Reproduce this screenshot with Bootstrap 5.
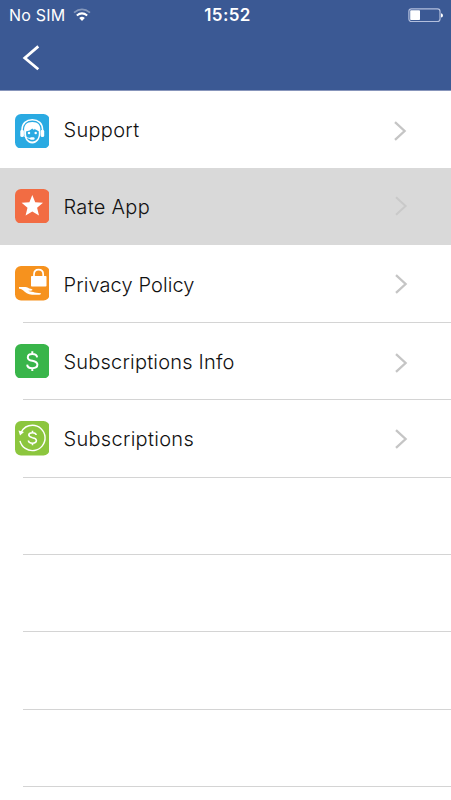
<!DOCTYPE html>
<html lang="en">
<head>
<meta charset="utf-8">
<meta name="viewport" content="width=device-width, initial-scale=1">
<title>Settings</title>
<link href="https://cdn.jsdelivr.net/npm/bootstrap@5.3.0/dist/css/bootstrap.min.css" rel="stylesheet">
<style>
body{font-family:Inter,"Liberation Sans",sans-serif;color:#111;height:800px;overflow:hidden;background:#fff}
.app-head{height:91px;background:#3b5994;border-bottom:1px solid #8795bb}
.status-line{height:30px;padding:0 8px 0 9px;display:grid;grid-template-columns:1fr auto 1fr}
.carrier{font-size:16px;letter-spacing:.2px;line-height:30px}
.clock{font-size:17px;font-weight:600;letter-spacing:.4px;line-height:30px;padding-left:3px}
.back-link{margin:13.5px 0 0 21px;width:20px;height:28px}
.menu-row{height:77.4px;padding:0 43px 0 14.5px;background:none;color:#111}
.first-row{height:77px}
.menu-row.pressed{background:#d9d9d9}
.app-icon{width:34.5px;height:34.5px;margin-right:14.5px}
.menu-text{font-size:20px;font-weight:300;line-height:28px;letter-spacing:.2px;padding-top:1px}
.menu-row .wide-text{letter-spacing:.3px}
.ruled{background:linear-gradient(#d4d4d4,#d4d4d4) 22.5px 100%/100% 1px no-repeat}
.first-row .chev{margin-right:1.5px}
</style>
<script src="https://cdn.jsdelivr.net/npm/bootstrap@5.3.0/dist/js/bootstrap.bundle.min.js"></script>
</head>
<body>
<header class="app-head text-white">
  <div class="status-line align-items-center">
    <div class="d-flex align-items-center gap-2"><span class="carrier text-nowrap">No SIM</span>
      <svg width="18" height="14" viewBox="0 0 18 14" fill="none" stroke="#fff"><path d="M1 4.6Q9-1.8 17 4.6" stroke-width="1.8" opacity=".38"/><path d="M3.8 7.5Q9 3.2 14.2 7.5" stroke-width="2"/><path d="M6.2 10Q9 7.7 11.8 10L9 13Z" fill="#fff" stroke="none"/></svg>
    </div>
    <span class="clock">15:52</span>
    <svg class="ms-auto" width="36" height="15" viewBox="0 0 36 15"><rect x="1.9" y=".9" width="31.1" height="12.6" rx="2.5" fill="none" stroke="#b3bfdd" stroke-width="1.2"/><rect x="3.2" y="2.3" width="9.8" height="9.8" rx=".8" fill="#fff"/><path d="M34 5.2Q36 5.4 36 7.4T34 9.6Z" fill="#fff"/></svg>
  </div>
  <a class="back-link d-block" href="#" aria-label="Back"><svg class="d-block" width="20" height="28" viewBox="0 0 20 28"><path d="M17.3 2.4 3.8 14 17.3 25.3" fill="none" stroke="#fff" stroke-width="2.8"/></svg></a>
</header>
<main>
  <a href="#" class="menu-row first-row d-flex align-items-center text-decoration-none">
    <svg class="app-icon" style="margin-top:3px" viewBox="0 0 34.5 34.5"><rect width="34.5" height="34.5" rx="6" fill="#2aaae2"/>
      <path d="M7 17V15.8C7 9.4 11.4 5.8 17.3 5.8S27.6 9.4 27.6 15.8V17" fill="none" stroke="#fff" stroke-width="1.5"/>
      <rect x="5.3" y="15.8" width="3.6" height="7.2" rx="1.6" fill="#fff"/><rect x="25.6" y="15.8" width="3.6" height="7.2" rx="1.6" fill="#fff"/>
      <path d="M9.2 17.5C8.5 11 11.7 8 17.3 8S26.1 11 25.3 17.5C25.8 24 22.6 29.4 17.3 29.4S8.8 24 9.2 17.5Z" fill="#fff"/>
      <path d="M11 17.4Q15 16.8 17.3 14.4Q18.2 15.6 19.4 15.9L19.1 14.8Q21.5 16 23.7 17.2C24.5 23.2 21.8 27.5 17.3 27.5C14.8 27.5 12.8 26.3 11.8 24.3Q10.9 21 11 17.4Z" fill="#2aaae2"/>
      <circle cx="14" cy="19" r="1.25" fill="#fff"/><circle cx="20.7" cy="19" r="1.25" fill="#fff"/><path d="M9.5 22Q12 24.7 16.2 24.6" fill="none" stroke="#fff" stroke-width="1.1"/><rect x="15" y="23.2" width="4.6" height="2.6" rx="1.2" fill="#fff"/></svg>
    <span class="menu-text wide-text">Support</span>
    <svg class="chev ms-auto" style="margin-top:2px" width="14" height="20" viewBox="0 0 14 20"><path d="M2 1.2 11.6 10 2 18.8" fill="none" stroke="#c5c5c5" stroke-width="2.3"/></svg>
  </a>
  <a href="#" class="menu-row pressed d-flex align-items-center text-decoration-none">
    <svg class="app-icon" style="margin-top:-1px" viewBox="0 0 34.5 34.5"><rect width="34.5" height="34.5" rx="6" fill="#f26c43"/><path d="M17.3 6.1 20.2 13.2 28 13.8 22.1 18.8 24 26.4 17.3 22.4 10.6 26.4 12.5 18.8 6.6 13.8 14.4 13.2Z" fill="#fff"/></svg>
    <span class="menu-text wide-text">Rate App</span>
    <svg class="chev ms-auto" style="margin-top:-1px" width="14" height="20" viewBox="0 0 14 20"><path d="M2 1.2 11.6 10 2 18.8" fill="none" stroke="#c9c9c9" stroke-width="2"/></svg>
  </a>
  <a href="#" class="menu-row ruled d-flex align-items-center text-decoration-none">
    <svg class="app-icon" style="margin-top:-1px" viewBox="0 0 34.5 34.5"><rect width="34.5" height="34.5" rx="6" fill="#f6921e"/><rect x="16" y="10" width="15.5" height="10.6" rx=".8" fill="#fff"/><path d="M19 10.5V8.4C19 5.3 20.8 3.7 23.6 3.7S28.2 5.3 28.2 8.4V10.5" fill="none" stroke="#fff" stroke-width="1.7"/><path d="M4 20.9H10.4C12.5 20.9 13.6 22.4 15.6 22.7C18 23 18.2 24.3 16 24.7L13.2 24.8C16.5 26 19 26.4 26 27.3Q26.2 28.7 24.5 28.8H17C13.2 28.8 10 26.3 8 24.3C6.5 23 5 22.8 4 22.8Z" fill="#fff"/></svg>
    <span class="menu-text" style="letter-spacing:.1px">Privacy Policy</span>
    <svg class="chev ms-auto" style="margin-top:-1px" width="14" height="20" viewBox="0 0 14 20"><path d="M2 1.2 11.6 10 2 18.8" fill="none" stroke="#c5c5c5" stroke-width="2.3"/></svg>
  </a>
  <a href="#" class="menu-row ruled d-flex align-items-center text-decoration-none">
    <svg class="app-icon" style="margin-top:-1px" viewBox="0 0 34.5 34.5"><rect width="34.5" height="34.5" rx="6" fill="#39b54a"/><path d="M22.1 13.4C21.8 11.2 20 10.1 17.3 10.1C14.6 10.1 12.8 11.4 12.8 13.4C12.8 15.6 14.6 16.2 17.3 16.8C20.4 17.5 22.4 18.3 22.4 20.6C22.4 22.9 20.3 24.2 17.3 24.2C14.3 24.2 12.3 22.9 12.2 20.6M17.3 7.2V10M17.3 24.2V27" fill="none" stroke="#fff" stroke-width="2"/></svg>
    <span class="menu-text">Subscriptions Info</span>
    <svg class="chev ms-auto" style="margin-top:3px" width="14" height="20" viewBox="0 0 14 20"><path d="M2 1.2 11.6 10 2 18.8" fill="none" stroke="#c5c5c5" stroke-width="2.3"/></svg>
  </a>
  <a href="#" class="menu-row ruled d-flex align-items-center text-decoration-none">
    <svg class="app-icon" style="margin-top:-1px" viewBox="0 0 34.5 34.5"><rect width="34.5" height="34.5" rx="6" fill="#8cc63e"/><path d="M6.2 11.3C8.5 6.6 12.7 4.2 17.5 4.2A12.7 12.7 0 1 1 5 19.8" fill="none" stroke="#fff" stroke-width="1.4"/><path d="M3.5 9.5 9 11.1 5 14.6Z" fill="#fff"/><path d="M21.2 14C21 12.5 19.7 11.7 17.5 11.7S13.8 12.6 13.8 14.1C13.8 15.8 15.3 16.2 17.5 16.7C20 17.2 21.4 17.9 21.4 19.6C21.4 21.3 19.8 22.2 17.5 22.2S13.5 21.2 13.4 19.5M17.5 9.7V12M17.5 22V24.3" fill="none" stroke="#fff" stroke-width="1.6"/></svg>
    <span class="menu-text wide-text">Subscriptions</span>
    <svg class="chev ms-auto" width="14" height="20" viewBox="0 0 14 20"><path d="M2 1.2 11.6 10 2 18.8" fill="none" stroke="#c5c5c5" stroke-width="2.3"/></svg>
  </a>
  <div class="menu-row ruled"></div>
  <div class="menu-row ruled"></div>
  <div class="menu-row ruled"></div>
  <div class="menu-row ruled"></div>
</main>
</body>
</html>
